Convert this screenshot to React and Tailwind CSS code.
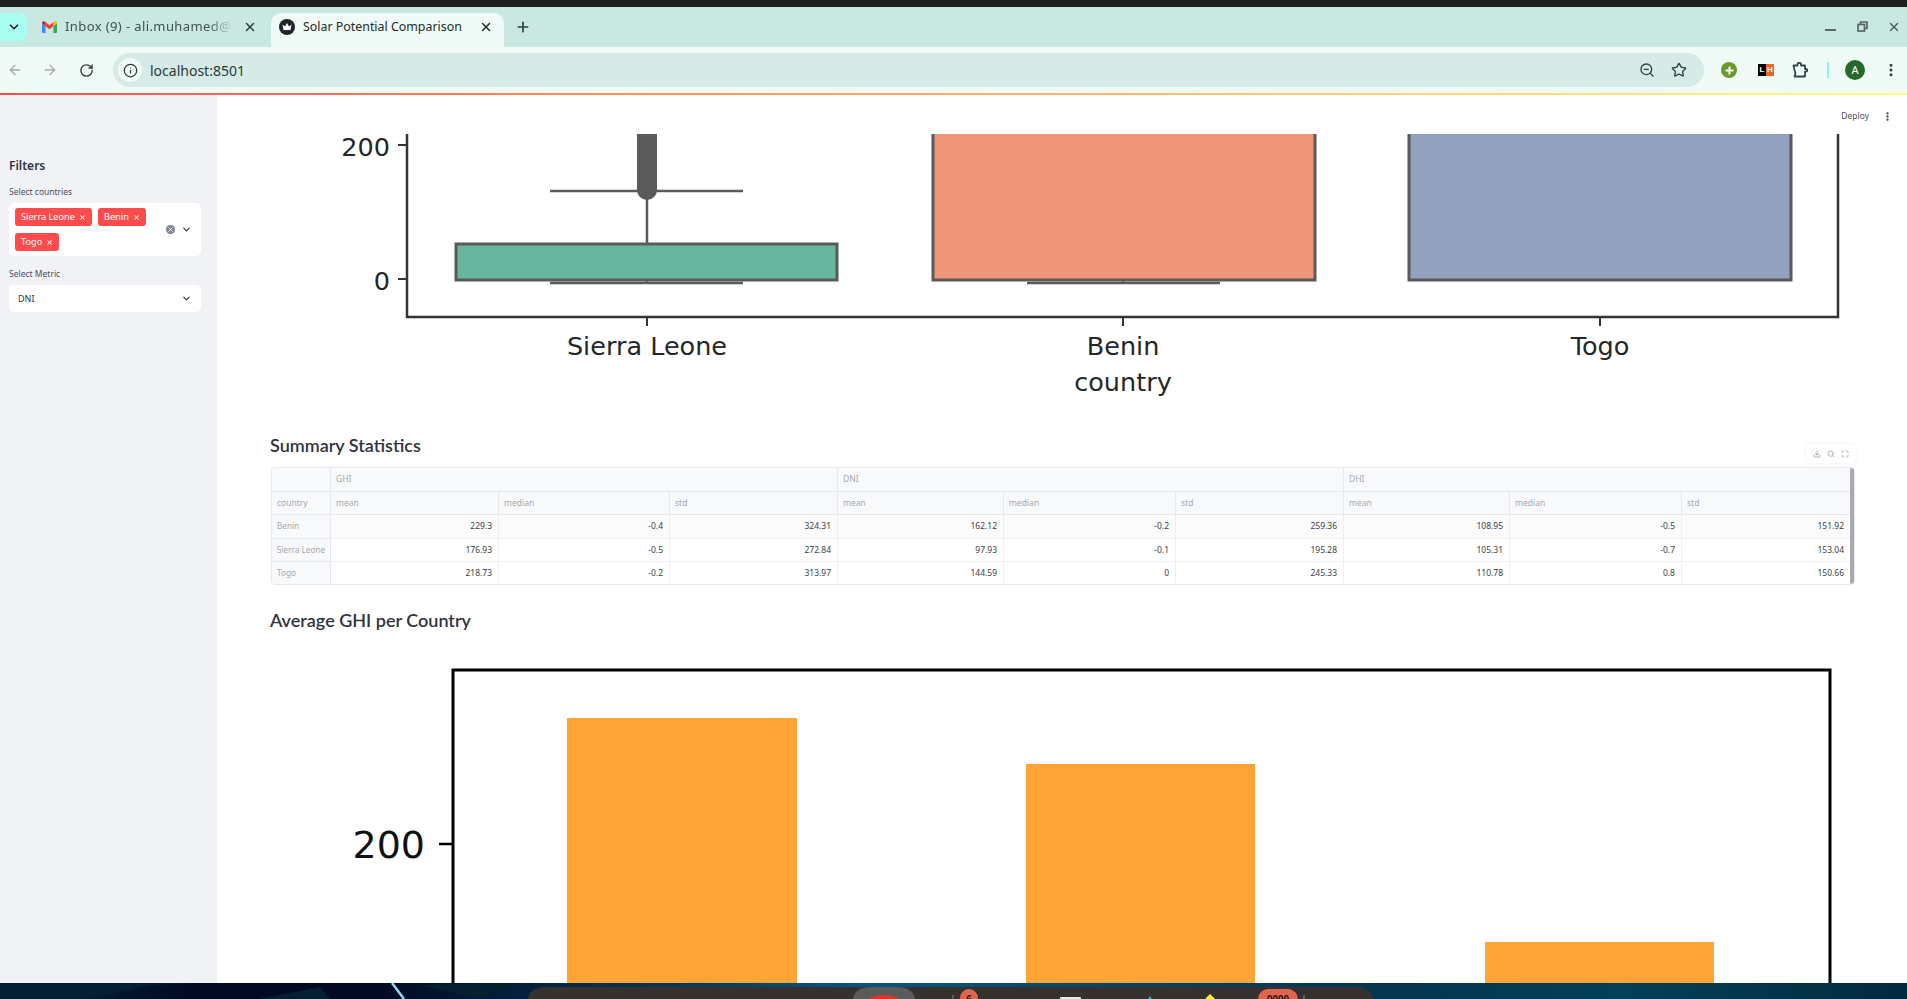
import {
  ArrowLeft, ArrowRight, ChevronDown, Download, EllipsisVertical, Info, Maximize, Plus, RotateCw, Search, Star, X, ZoomOut,
} from 'lucide-react'

const columns = ['mean', 'median', 'std']
const rows = [
  { name: 'Benin', values: ['229.3', '-0.4', '324.31', '162.12', '-0.2', '259.36', '108.95', '-0.5', '151.92'], bg: 'bg-[#fbfbfc]' },
  { name: 'Sierra Leone', values: ['176.93', '-0.5', '272.84', '97.93', '-0.1', '195.28', '105.31', '-0.7', '153.04'], bg: 'bg-white' },
  { name: 'Togo', values: ['218.73', '-0.2', '313.97', '144.59', '0', '245.33', '110.78', '0.8', '150.66'], bg: 'bg-white' },
]

function Gmail() {
  return (
    <svg width="15" height="12" viewBox="0 0 15 12">
      <path d="M0 2v9a1 1 0 0 0 1 1h2.500V5.200z" fill="#4285f4" />
      <path d="M15 2v9a1 1 0 0 1-1 1h-2.500V5.200z" fill="#34a853" />
      <path d="M3.500 5.200V1L7.500 4.200 11.500 1v4.200L7.500 8.300z" fill="#ea4335" />
      <path d="M0 2c0-1.700 2-2.500 3.500-1v4.200z" fill="#c5221f" />
      <path d="M15 2c0-1.700-2-2.500-3.500-1v4.200z" fill="#fbbc04" />
    </svg>
  )
}

function Crown() {
  return (
    <svg width="16" height="16" viewBox="0 0 16 16">
      <circle cx="8" cy="8" r="8" fill="#20252b" />
      <path d="M3.500 5.500 6 7.500 8 4l2 3.500 2.500-2-1 5.500h-7z" fill="#fff" />
    </svg>
  )
}

// chrome's extensions piece, lucide's Puzzle is too curly for it
function ExtensionPiece() {
  return (
    <svg width="17" height="16" viewBox="0 0 17 16" fill="none" stroke="#2b4a49" strokeWidth="1.800" strokeLinejoin="round" className="ml-[18px]">
      <path d="M1.500 3.500H5.500V2.500a1.500 1.500 0 0 1 3.500 0v1h4v3.500h1a1.300 1.300 0 0 1 0 2.600h-1V14.500H2.500L3.500 11.500 2.500 8z" />
    </svg>
  )
}

function TopBars() {
  return (
    <header className="shrink-0">
      <div className="h-[7px] bg-[#1f1d1e]" />
      <div className="h-[40px] bg-[#c9e8e2] flex items-end relative">
        <div className="w-[27px] h-[28px] mb-[6px] bg-[#a8fff2] rounded-r-lg flex items-center justify-center">
          <ChevronDown className="w-[14px] h-[14px] text-[#1c2b2a]" strokeWidth={3} />
        </div>
        <div className="h-[34px] w-[244px] flex items-center pb-[6px] pl-[15px] text-[13px] text-[#40514f] tracking-[0.4px]">
          <Gmail />
          <span className="ml-[8px] w-[168px] overflow-hidden whitespace-nowrap [mask-image:linear-gradient(to_right,black_85%,transparent)]">Inbox (9) - ali.muhamed@a2</span>
          <X className="w-[14px] h-[14px] ml-[10px] text-[#2f3f3e]" strokeWidth={2.5} />
        </div>
        <div className="h-[34px] w-[233px] bg-[#f0faf6] rounded-t-[10px] flex items-center pb-[6px] pl-[8px] text-[12.4px] text-[#1f2b2a]">
          <Crown />
          <span className="ml-[8px] whitespace-nowrap">Solar Potential Comparison</span>
          <X className="w-[14px] h-[14px] ml-[17px] text-[#1f2b2a]" strokeWidth={2.5} />
        </div>
        <div className="h-[34px] flex items-center pb-[6px] ml-[11px]">
          <Plus className="w-[16px] h-[16px] text-[#2f3f3e]" strokeWidth={2.5} />
        </div>
        <div className="ml-auto h-[40px] flex items-start pt-[15px] text-[#4f5b5a]">
          <div className="w-[11px] h-[2px] bg-[#5b6665] mt-[7px] mr-[21px]" />
          <svg width="11" height="11" viewBox="0 0 11 11" className="mr-[19px] -mt-[1px]" fill="none" stroke="#5b6665" strokeWidth="1.700">
            <rect x="1" y="3.500" width="6.500" height="6.500" />
            <path d="M3.500 3V1H10v6.500H8" />
          </svg>
          <X className="w-[14px] h-[14px] mr-[6px] -mt-[2px]" strokeWidth={2.5} />
        </div>
      </div>
      <div className="h-[46px] bg-[#f0faf6] flex items-center">
        <ArrowLeft className="w-[16px] h-[16px] ml-[7px] text-[#a3adab]" strokeWidth={2} />
        <ArrowRight className="w-[16px] h-[16px] ml-[19px] text-[#a3adab]" strokeWidth={2} />
        <RotateCw className="w-[15px] h-[15px] ml-[21px] text-[#2f3f3e]" strokeWidth={2.2} />
        <div className="ml-[19px] h-[34px] w-[1591px] bg-[#d6ebe7] rounded-full flex items-center pl-[5px]">
          <div className="w-[24px] h-[24px] rounded-full bg-[#f0faf6] flex items-center justify-center">
            <Info className="w-[15px] h-[15px] text-[#2b3a39]" strokeWidth={2} />
          </div>
          <span className="ml-[8px] text-[14px] text-[#2b3a39]">localhost:8501</span>
          <ZoomOut className="w-[16px] h-[16px] ml-auto text-[#2f3f3e]" strokeWidth={2} />
          <Star className="w-[16px] h-[16px] ml-[16px] mr-[17px] text-[#2f3f3e]" strokeWidth={2} />
        </div>
        <div className="ml-[17px] w-[16px] h-[16px] rounded-full bg-[#6b9a2f] flex items-center justify-center">
          <Plus className="w-[11px] h-[11px] text-white" strokeWidth={4} />
        </div>
        <div className="ml-[21px] flex h-[12px] w-[16px] text-[8px] leading-[12px] font-bold text-center [font-family:'Liberation_Sans',sans-serif]">
          <span className="w-[8px] bg-black text-white">L</span>
          <span className="w-[8px] bg-[#f4622a] text-white">H</span>
        </div>
        <ExtensionPiece />
        <div className="ml-[18px] w-[2px] h-[16px] bg-[#8ff2e8]" />
        <div className="ml-[16px] w-[20px] h-[20px] rounded-full bg-[#256a2b] text-white text-[11px] flex items-center justify-center">A</div>
        <EllipsisVertical className="w-[16px] h-[16px] ml-[18px] text-[#2f3f3e]" strokeWidth={2.5} />
      </div>
      <div className="h-[2px] bg-gradient-to-r from-[#ff4b4b] to-[#fffd80]" />
    </header>
  )
}

function Sidebar() {
  return (
    <aside className="w-[217px] shrink-0 bg-[#f0f2f6] pl-[9px] pr-[16px] pt-[63px] text-[#31333f]">
      <h2 className="text-[12px] leading-[16px] font-semibold">Filters</h2>
      <label className="block mt-[12px] text-[8.5px] leading-[12px] text-[#4d4f5a]">Select countries</label>
      <div className="mt-[5px] h-[53px] bg-white rounded-[5px] flex pl-[6px] relative">
        <div className="w-[145px] flex flex-wrap content-start gap-x-[6px] gap-y-[7px] pt-[5px]">
          <Tag label="Sierra Leone" />
          <Tag label="Benin" />
          <Tag label="Togo" />
        </div>
        <div className="ml-auto flex items-center pr-[9px]">
          <div className="w-[9px] h-[9px] rounded-full bg-[#808495] flex items-center justify-center">
            <X className="w-[7px] h-[7px] text-white" strokeWidth={3} />
          </div>
          <ChevronDown className="w-[11px] h-[11px] ml-[6px] text-[#31333f]" strokeWidth={2.5} />
        </div>
      </div>
      <label className="block mt-[12px] text-[8.5px] leading-[12px] text-[#4d4f5a]">Select Metric</label>
      <div className="mt-[5px] h-[27px] bg-white rounded-[5px] flex items-center pl-[9px] pr-[9px] text-[9px]">
        DNI
        <ChevronDown className="w-[11px] h-[11px] ml-auto text-[#31333f]" strokeWidth={2.5} />
      </div>
    </aside>
  )
}

function Tag({ label }) {
  return (
    <span className="h-[18px] bg-[#ff4b4b] text-white rounded-[3px] px-[6px] text-[9.2px] flex items-center gap-[4px] whitespace-nowrap">
      {label}
      <X className="w-[7px] h-[7px]" strokeWidth={3.5} />
    </span>
  )
}

function BoxPlot() {
  const dark = '#5a5a5a'
  const label = { fontFamily: 'DejaVu Sans, sans-serif', fontSize: 25.5, fill: '#262626', textAnchor: 'middle' }
  return (
    <svg viewBox="270 134 1585 296" className="w-[1585px] h-[296px] block">
      {/* y axis + ticks */}
      <path d="M407 134V317H1838V134" fill="none" stroke="#333" strokeWidth="2.500" />
      <path d="M398 145h9M398 279h9M647 317v9M1123 317v9M1600 317v9" stroke="#333" strokeWidth="2" />
      <text x="390" y="156" textAnchor="end" fontFamily="DejaVu Sans, sans-serif" fontSize="25.5" fill="#262626">200</text>
      <text x="390" y="290" textAnchor="end" fontFamily="DejaVu Sans, sans-serif" fontSize="25.5" fill="#262626">0</text>

      {/* Sierra Leone */}
      <path d="M550 191H743M550 283H743M647 191V244M647 280V283" stroke={dark} strokeWidth="2.500" />
      <path d="M637 134H657V190a10 10 0 0 1-20 0z" fill={dark} />
      <rect x="456" y="244" width="381" height="36" fill="#68b6a0" stroke={dark} strokeWidth="3" />

      {/* Benin */}
      <path d="M1027 283H1220M1123 280V283" stroke={dark} strokeWidth="2.500" />
      <path d="M933 134V280H1315V134" fill="#ef957a" stroke={dark} strokeWidth="3" />

      {/* Togo */}
      <path d="M1409 134V280H1791V134" fill="#93a1c0" stroke={dark} strokeWidth="3" />

      <text x="647" y="355" {...label}>Sierra Leone</text>
      <text x="1123" y="355" {...label}>Benin</text>
      <text x="1600" y="355" {...label}>Togo</text>
      <text x="1123" y="391" {...label}>country</text>
    </svg>
  )
}

function StatsTable() {
  const head = 'bg-[#f8f9fb] text-[#a6a8ae] border-r border-b border-[#e6e8ee] px-[5px] flex items-center'
  return (
    <div className="relative">
      <div className="absolute right-[-1px] top-[-23px] w-[50px] h-[19px] bg-white rounded-[5px] shadow-[0_0_3px_rgba(0,0,0,0.08)] flex items-center justify-around px-[4px] text-[#8c8f99]">
        <Download className="w-[8px] h-[8px]" strokeWidth={2} />
        <Search className="w-[8px] h-[8px]" strokeWidth={2} />
        <Maximize className="w-[8px] h-[8px]" strokeWidth={2} />
      </div>
      <div className="ml-[1px] relative border border-[#e6e8ee] rounded-[4px] overflow-hidden text-[8.5px] pr-[3px] bg-white">
        <div className="grid grid-cols-[59px_168px_171px_168px_166px_172px_168px_166px_172px_169px] grid-rows-[24px_23px_24px_23px_22px]">
          <div className={head} />
          <div className={`${head} col-span-3`}>GHI</div>
          <div className={`${head} col-span-3`}>DNI</div>
          <div className={`${head} col-span-3`}>DHI</div>
          <div className={head}>country</div>
          {[0, 1, 2].map((g) => columns.map((c) => <div key={g + c} className={head}>{c}</div>))}
          {rows.map((row, i) => (
            <div key={row.name} className="contents">
              <div className={`${head} text-[8.2px] whitespace-nowrap ${i === 2 ? 'border-b-0' : ''}`}>{row.name}</div>
              {row.values.map((v, j) => (
                <div key={j} className={`${row.bg} text-[#3c3e49] border-r border-b border-[#eef0f3] px-[6px] flex items-center justify-end ${i === 2 ? 'border-b-0' : ''}`}>{v}</div>
              ))}
            </div>
          ))}
        </div>
        <div className="absolute right-0 top-0 bottom-0 w-[4px] bg-[#a9a9ae] rounded-full" />
      </div>
    </div>
  )
}

function BarChart() {
  return (
    <svg viewBox="270 640 1585 343" className="w-[1585px] h-[343px] block">
      <path d="M453 983V669H1830V983" fill="none" stroke="#000" strokeWidth="3" />
      <path d="M439 843h14" stroke="#000" strokeWidth="2.500" />
      <text x="425" y="857" textAnchor="end" fontFamily="DejaVu Sans, sans-serif" fontSize="38" fill="#111">200</text>
      <rect x="567" y="717" width="230" height="266" fill="#ffa537" />
      <rect x="1026" y="763" width="229" height="220" fill="#ffa537" />
      <rect x="1485" y="941" width="229" height="42" fill="#ffa537" />
    </svg>
  )
}

function Desktop() {
  return (
    <svg viewBox="0 983 1907 16" className="w-full h-[16px] block shrink-0" preserveAspectRatio="none">
      <defs>
        <linearGradient id="wall" x1="0" x2="1" y1="0" y2="0">
          <stop offset="0" stopColor="#04293c" />
          <stop offset="0.1" stopColor="#020a22" />
          <stop offset="0.2" stopColor="#020a22" />
          <stop offset="0.45" stopColor="#06557f" />
          <stop offset="0.73" stopColor="#04344e" />
          <stop offset="0.85" stopColor="#044058" />
          <stop offset="1" stopColor="#032a3e" />
        </linearGradient>
      </defs>
      <rect x="0" y="983" width="1907" height="16" fill="url(#wall)" />
      <path d="M90 999 150 985 200 983H0V999zM260 999 320 987 330 999zM420 985 520 983 480 999z" fill="#031f30" />
      <path d="M392 983 404 999" stroke="#8fd8e8" strokeWidth="2.500" />
      <path d="M528 999c2-8 6-12 18-12h810c10 0 15 4 17 12z" fill="#36312f" />
      <path d="M853 999c1-8 8-12 18-12h26c10 0 17 4 18 12z" fill="#5c5a58" />
      <circle cx="884" cy="1025" r="30" fill="#d9352b" />
      <rect x="960" y="989" width="18" height="20" rx="9" fill="#e0654f" />
      <text x="969" y="1003" textAnchor="middle" fontSize="10" fontWeight="700" fontFamily="Liberation Sans, sans-serif" fill="#2a1b18">6</text>
      <rect x="1060" y="997" width="21" height="8" rx="1" fill="#e8e8e8" />
      <path d="M1148 999l2-3 2 3z" fill="#2ba8d8" />
      <path d="M1205 999l5-5 5 5z" fill="#ffe93a" />
      <rect x="1258" y="989" width="40" height="24" rx="10" fill="#e0654f" />
      <text x="1278" y="1003" textAnchor="middle" fontSize="10" fontWeight="700" fontFamily="Liberation Sans, sans-serif" fill="#2a1b18">9999</text>
      <path d="M1304 995V999M953 995V999" stroke="#8a8786" />
    </svg>
  )
}

export default function App() {
  return (
    <div className="h-[999px] w-[1907px] overflow-hidden flex flex-col bg-white [font-family:'Noto_Sans',sans-serif]">
      <TopBars />
      <div className="flex-1 flex min-h-0">
        <Sidebar />
        <main className="flex-1 min-w-0 overflow-hidden pl-[53px] pr-[52px]">
          <div className="h-[39px] flex items-center justify-end pt-[4px] text-[#4d4f5a] text-[8.5px] mr-[-38px]">
            <span>Deploy</span>
            <EllipsisVertical className="w-[11px] h-[11px] ml-[13px] text-[#31333f]" strokeWidth={3} />
          </div>
          <BoxPlot />
          <h3 className="h-[37px] text-[18px] leading-[30px] font-semibold [font-family:Lato,sans-serif] text-[#31333f]">Summary Statistics</h3>
          <StatsTable />
          <h3 className="h-[56px] pt-[20px] text-[18px] leading-[30px] font-semibold [font-family:Lato,sans-serif] text-[#31333f]">Average GHI per Country</h3>
          <BarChart />
        </main>
      </div>
      <Desktop />
    </div>
  )
}
